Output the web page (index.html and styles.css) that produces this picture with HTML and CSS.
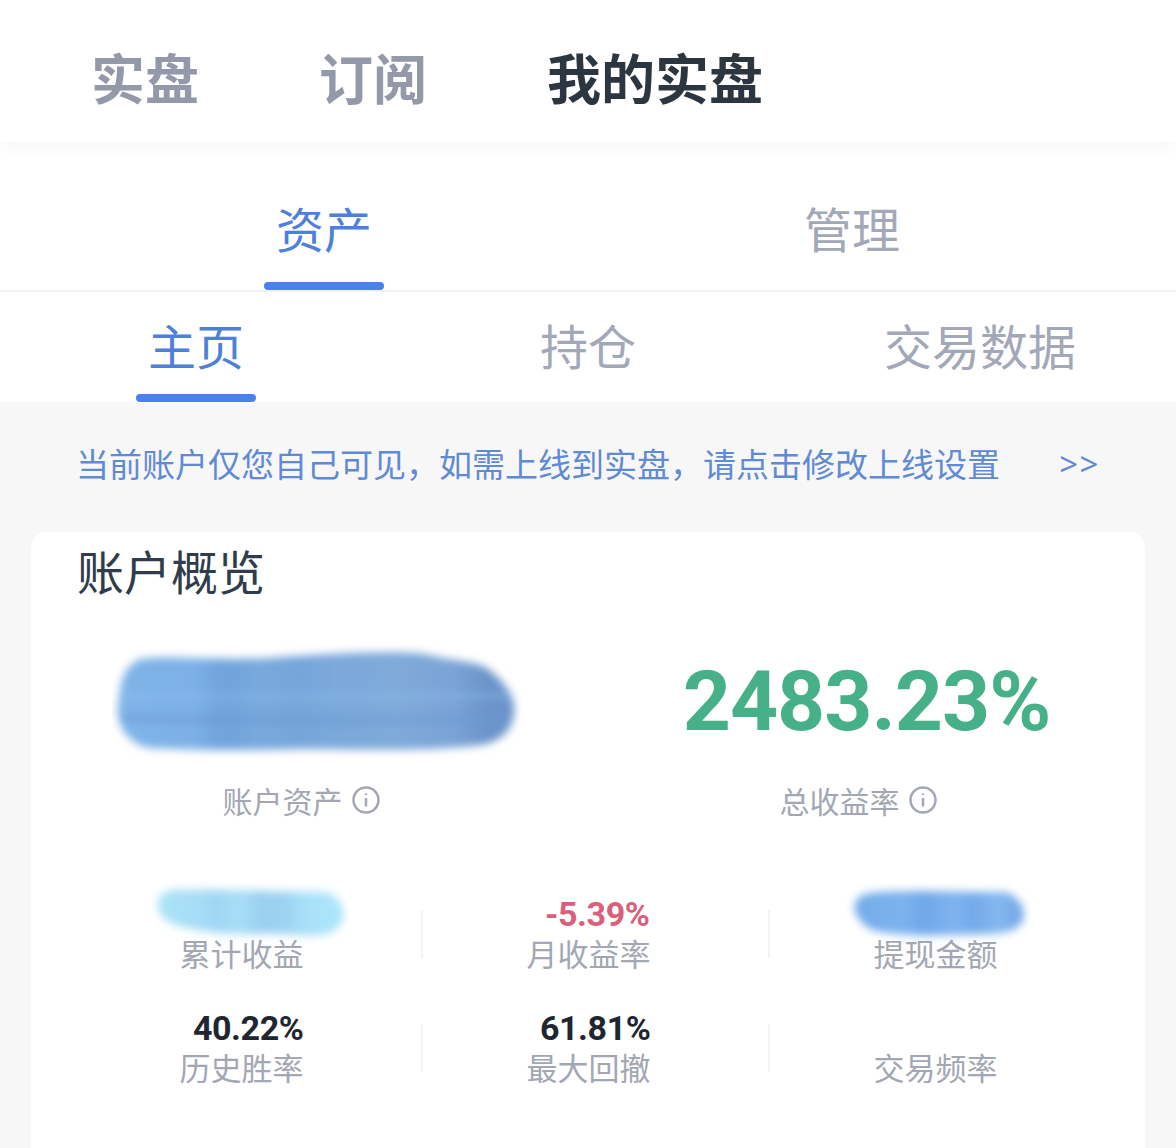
FILE: index.html
```html
<!DOCTYPE html>
<html lang="zh-CN">
<head>
  <meta charset="UTF-8">
  <title>我的实盘</title>
  <link rel="stylesheet" href="styles.css">
</head>
<body>
  <svg class="defs" width="0" height="0">
    <defs>
      <filter id="smear" x="-10%" y="-20%" width="120%" height="140%"><feGaussianBlur stdDeviation="4"/></filter>
      <linearGradient id="bigFill" x1="0" x2="1" y1="0" y2="0">
        <stop offset="0" stop-color="#80b4e8"/>
        <stop offset="0.12" stop-color="#7db1e7"/>
        <stop offset="0.19" stop-color="#7db1e6"/>
        <stop offset="0.25" stop-color="#72a5dd"/>
        <stop offset="0.3" stop-color="#72a4db"/>
        <stop offset="0.35" stop-color="#79a9dd"/>
        <stop offset="0.45" stop-color="#76a5da"/>
        <stop offset="0.55" stop-color="#7ba8da"/>
        <stop offset="0.7" stop-color="#7faad9"/>
        <stop offset="0.85" stop-color="#7aa3d6"/>
        <stop offset="0.93" stop-color="#6b94ca"/>
        <stop offset="1" stop-color="#6a92c9"/>
      </linearGradient>
      <linearGradient id="paleFill" x1="0" x2="1" y1="0" y2="0">
        <stop offset="0" stop-color="#ace3f8"/>
        <stop offset="0.25" stop-color="#a6dcf6"/>
        <stop offset="0.3" stop-color="#a0d6f3"/>
        <stop offset="0.45" stop-color="#a8def6"/>
        <stop offset="0.55" stop-color="#9bcff1"/>
        <stop offset="0.7" stop-color="#9dd3f2"/>
        <stop offset="0.78" stop-color="#a8e0f8"/>
        <stop offset="1" stop-color="#ace6fb"/>
      </linearGradient>
      <linearGradient id="midFill" x1="0" x2="1" y1="0" y2="0">
        <stop offset="0" stop-color="#74acea"/>
        <stop offset="0.3" stop-color="#7cb3ee"/>
        <stop offset="0.4" stop-color="#6fa7e8"/>
        <stop offset="0.6" stop-color="#7fb4ef"/>
        <stop offset="0.7" stop-color="#72a9e9"/>
        <stop offset="0.85" stop-color="#84b8f0"/>
        <stop offset="1" stop-color="#70a5e6"/>
      </linearGradient>
    </defs>
  </svg>

  <nav class="top-nav">
    <a class="top-item">实盘</a>
    <a class="top-item">订阅</a>
    <a class="top-item active">我的实盘</a>
  </nav>

  <div class="tabs tabs-main">
    <a class="tab active">资产</a>
    <a class="tab">管理</a>
  </div>

  <div class="tabs tabs-sub">
    <a class="tab active">主页</a>
    <a class="tab">持仓</a>
    <a class="tab">交易数据</a>
  </div>

  <main class="content">
    <div class="notice">
      <span>当前账户仅您自己可见&#65292;如需上线到实盘&#65292;请点击修改上线设置</span>
      <span class="notice-more">&gt;&gt;</span>
    </div>

    <section class="card">
      <h2 class="card-title">账户概览</h2>

      <div class="hero">
        <div class="hero-item">
          <svg class="hero-blob" width="410" height="114" viewBox="112 645 410 114">
            <g filter="url(#smear)">
              <path fill="url(#bigFill)" d="M140 659 C170 655 215 661 270 658 C330 654 390 650 425 654 C445 660 470 660 487 668 C502 680 516 695 514 712 C512 735 495 745 470 746 C420 752 360 749 300 749 C240 751 190 750 150 748 C128 744 115 725 118 705 C120 690 120 668 140 659 Z"/>
              <path fill="#6a9ad2" opacity="0.5" d="M120 714 C250 718 400 716 514 716 L512 724 C400 724 250 726 122 722 Z"/>
              <path fill="#8fc0ee" opacity="0.35" d="M120 692 C250 694 400 692 508 692 L510 700 C400 700 250 702 120 700 Z"/>
            </g>
          </svg>
          <div class="hero-label">账户资产
            <svg class="info" width="30" height="30" viewBox="0 0 30 30"><circle cx="15" cy="15" r="12.5"/><line x1="15" y1="13" x2="15" y2="21.5"/><line x1="15" y1="8.5" x2="15" y2="10"/></svg>
          </div>
        </div>
        <div class="hero-item">
          <div class="hero-value">2483.23%</div>
          <div class="hero-label">总收益率
            <svg class="info" width="30" height="30" viewBox="0 0 30 30"><circle cx="15" cy="15" r="12.5"/><line x1="15" y1="13" x2="15" y2="21.5"/><line x1="15" y1="8.5" x2="15" y2="10"/></svg>
          </div>
        </div>
      </div>

      <div class="stats">
        <div class="stat divided">
          <svg class="stat-blob blob-pale" width="200" height="64" viewBox="150 881 200 64">
            <path filter="url(#smear)" fill="url(#paleFill)" d="M172 890 C210 888 270 892 325 892 C342 896 346 912 342 922 C335 936 315 938 290 934 C260 933 230 936 205 931 C180 928 160 922 158 908 C157 897 163 891 172 890 Z"/>
          </svg>
          <div class="stat-value"></div>
          <div class="stat-label">累计收益</div>
        </div>
        <div class="stat divided">
          <div class="stat-value down">-5.39%</div>
          <div class="stat-label">月收益率</div>
        </div>
        <div class="stat">
          <svg class="stat-blob blob-mid" width="186" height="60" viewBox="847 883 186 60">
            <path filter="url(#smear)" fill="url(#midFill)" d="M870 893 C900 889 950 892 1005 892 C1020 896 1026 910 1023 920 C1018 932 1000 935 975 934 C940 936 900 936 875 931 C860 925 852 912 855 903 C858 896 864 894 870 893 Z"/>
          </svg>
          <div class="stat-value"></div>
          <div class="stat-label">提现金额</div>
        </div>
        <div class="stat divided">
          <div class="stat-value">40.22%</div>
          <div class="stat-label">历史胜率</div>
        </div>
        <div class="stat divided">
          <div class="stat-value">61.81%</div>
          <div class="stat-label">最大回撤</div>
        </div>
        <div class="stat">
          <div class="stat-value"></div>
          <div class="stat-label">交易频率</div>
        </div>
      </div>
    </section>
  </main>
</body>
</html>
```

FILE: styles.css
```css
* {
  box-sizing: border-box;
}
html, body {
  height: 1148px;
  overflow: hidden;
}
body {
  margin: 0;
  background-color: #fff;
  font-family: "Noto Sans CJK SC", "Liberation Sans", sans-serif;
}
.defs {
  position: absolute;
}

/* top nav */
.top-nav {
  position: relative;
  display: flex;
  gap: 120px;
  height: 142px;
  padding: 12px 0 0 91px;
  align-items: center;
  background-color: #fff;
  box-shadow: 0 8px 16px rgba(30, 40, 60, 0.03);
}
.top-item {
  font-size: 54px;
  font-weight: 700;
  line-height: 70px;
  color: #9499a9;
}
.top-item.active {
  color: #2b3640;
}

/* tabs */
.tabs {
  display: grid;
  background-color: #fff;
}
.tabs-main {
  grid-template-columns: 1fr 1fr;
  height: 150px;
  padding: 57px 60px 0;
  border-bottom: 2px solid #f1f2f4;
}
.tabs-sub {
  grid-template-columns: repeat(3, 1fr);
  height: 110px;
  padding-top: 24px;
}
.tab {
  display: block;
  font-size: 48px;
  line-height: 56px;
  text-align: center;
  color: #a2a8b8;
}
.tab.active {
  color: #4d7fdb;
}
.tab.active::after {
  content: "";
  display: block;
  width: 120px;
  height: 8px;
  margin: 27px auto 0;
  border-radius: 4px;
  background-color: #4c80ee;
}
.tabs-sub .tab.active::after {
  margin-top: 22px;
}

/* content */
.content {
  height: 746px;
  background-color: #f7f7f8;
}
.notice {
  display: flex;
  justify-content: space-between;
  align-items: center;
  height: 130px;
  padding: 0 76px 8px;
  font-size: 33px;
  color: #5f8ad6;
}
.notice-more {
  font-family: "Noto Sans", sans-serif;
  font-size: 33px;
  letter-spacing: 1.5px;
}
.card {
  width: 1114px;
  height: 640px;
  margin-left: 31px;
  padding-top: 8px;
  border-radius: 16px;
  background-color: #fff;
}
.card-title {
  margin: 0;
  padding-left: 46px;
  font-size: 47px;
  font-weight: 400;
  line-height: 60px;
  color: #2f3c4c;
}

/* big numbers */
.hero {
  display: grid;
  grid-template-columns: 1fr 1fr;
  margin-top: 45px;
}
.hero-item {
  display: flex;
  flex-direction: column;
  align-items: center;
}
.hero-blob {
  display: block;
  margin-left: 14px;
}
.hero-value {
  height: 114px;
  font-family: Roboto, sans-serif;
  font-size: 84px;
  font-weight: 700;
  line-height: 114px;
  letter-spacing: -1px;
  color: #46b088;
}
.hero-label {
  display: flex;
  align-items: center;
  gap: 8px;
  height: 40px;
  margin: 21px 16px 0 0;
  font-size: 30px;
  color: #a2a7b3;
}
.info {
  fill: none;
  stroke: #a2a7b3;
  stroke-width: 2.5;
}

/* small numbers */
.stats {
  display: grid;
  grid-template-columns: repeat(3, 347px);
  row-gap: 36px;
  margin-top: 75px;
  margin-left: 45px;
}
.stat {
  position: relative;
  display: flex;
  flex-direction: column;
  align-items: center;
  padding-right: 16px;
}
.stat.divided::after {
  content: "";
  position: absolute;
  top: 15px;
  right: 0;
  width: 2px;
  height: 48px;
  background-color: #f3f4f6;
}
.stat-value {
  align-self: center;
  width: 124px;
  height: 38px;
  font-family: Roboto, sans-serif;
  font-size: 34px;
  font-weight: 700;
  line-height: 38px;
  letter-spacing: -0.4px;
  text-align: right;
  white-space: nowrap;
  color: #1e2632;
}
.stat-value.down {
  width: 122px;
  color: #d9607a;
}
.stat-label {
  font-size: 31px;
  line-height: 40px;
  color: #a2a7b3;
}
.stat-blob {
  position: absolute;
  z-index: 1;
}
.blob-pale {
  top: -14px;
  left: 74px;
}
.blob-mid {
  top: -12px;
  left: 77px;
}
```
